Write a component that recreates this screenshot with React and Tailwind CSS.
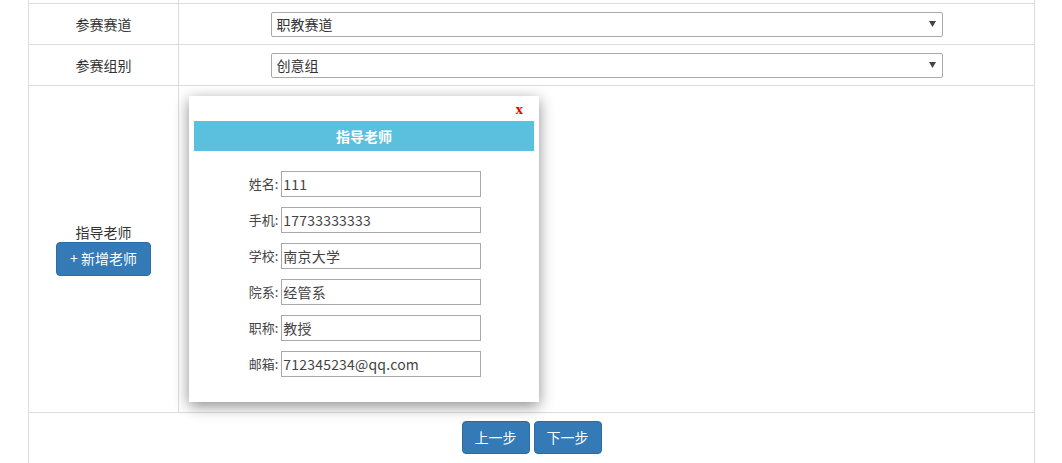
import React from 'react';

const FONT = { fontFamily: '"Noto Sans CJK SC", "Liberation Sans", sans-serif' };

const TEACHER = [
  { label: '姓名', value: '111' },
  { label: '手机', value: '17733333333' },
  { label: '学校', value: '南京大学' },
  { label: '院系', value: '经管系' },
  { label: '职称', value: '教授' },
  { label: '邮箱', value: '712345234@qq.com' }
];

const SelectBox = ({ value }) => (
  <div className="flex h-[25px] w-[672px] items-center justify-between rounded-[2px] border border-[#a9a9a9] bg-white pl-[5px] pr-[6px] text-[14px] text-[#333]">
    <span>{value}</span>
    <svg width="7" height="6" viewBox="0 0 7 6">
      <path d="M0 0 L7 0 L3.5 6 Z" fill="#444" />
    </svg>
  </div>
);

const FormRow = ({ label, children, height }) => (
  <div className={`flex border-t border-[#ddd] ${height}`}>
    <div className="flex w-[150px] shrink-0 items-center justify-center border-r border-[#ddd] text-[14px] text-[#333]">
      {label}
    </div>
    <div className="relative flex flex-1 items-center justify-center">{children}</div>
  </div>
);

const TeacherModal = () => (
  <div className="absolute left-[10px] top-[10px] h-[306px] w-[350px] bg-white px-[5px] shadow-[0_4px_14px_rgba(0,0,0,0.45)]">
    <div className="flex h-[25px] items-end justify-end pb-[4px] pr-[11px]">
      <span className="text-[15px] font-bold leading-none text-[#e00]" style={{ fontFamily: '"Liberation Serif", serif' }}>
        x
      </span>
    </div>
    <div className="flex h-[30px] items-center justify-center bg-[#5bc0de] text-[14px] font-bold text-white">
      指导老师
    </div>
    <div className="mt-[20px] flex flex-col items-center gap-[10px] pl-[2px]">
      {TEACHER.map((item) => (
        <div key={item.label} className="flex items-center">
          <span className="text-[13px] text-[#444]">{item.label}:</span>
          <div className="ml-[3px] flex h-[26px] w-[200px] items-center border border-[#a9a9a9] px-[1px] text-[14px] tracking-[0.2px] text-[#444]">
            {item.value}
          </div>
        </div>
      ))}
    </div>
  </div>
);

export default function App() {
  return (
    <div className="h-[463px] w-[1062px] overflow-hidden bg-white" style={FONT}>
      <div className="ml-[28px] w-[1007px] border-x border-[#ddd]">
        <div className="flex h-[3px]">
          <div className="w-[150px] border-r border-[#ddd]" />
        </div>
        <FormRow label="参赛赛道" height="h-[41px]">
          <SelectBox value="职教赛道" />
        </FormRow>
        <FormRow label="参赛组别" height="h-[41px]">
          <SelectBox value="创意组" />
        </FormRow>
        <div className="flex h-[327px] border-t border-[#ddd]">
          <div className="flex w-[150px] shrink-0 flex-col items-center justify-center border-r border-[#ddd] text-[14px] text-[#333]">
            <span className="leading-[18px]">指导老师</span>
            <button className="mt-[1px] h-[34px] rounded-[4px] border border-[#2e6da4] bg-[#337ab7] px-[13px] text-[14px] text-white">
              + 新增老师
            </button>
          </div>
          <div className="relative flex-1">
            <TeacherModal />
          </div>
        </div>
        <div className="flex h-[60px] justify-center gap-[4px] border-t border-[#ddd] pt-[8px]">
          <button className="h-[33px] rounded-[4px] border border-[#2e6da4] bg-[#337ab7] px-[12px] text-[14px] text-white">
            上一步
          </button>
          <button className="h-[33px] rounded-[4px] border border-[#2e6da4] bg-[#337ab7] px-[12px] text-[14px] text-white">
            下一步
          </button>
        </div>
      </div>
    </div>
  );
}
